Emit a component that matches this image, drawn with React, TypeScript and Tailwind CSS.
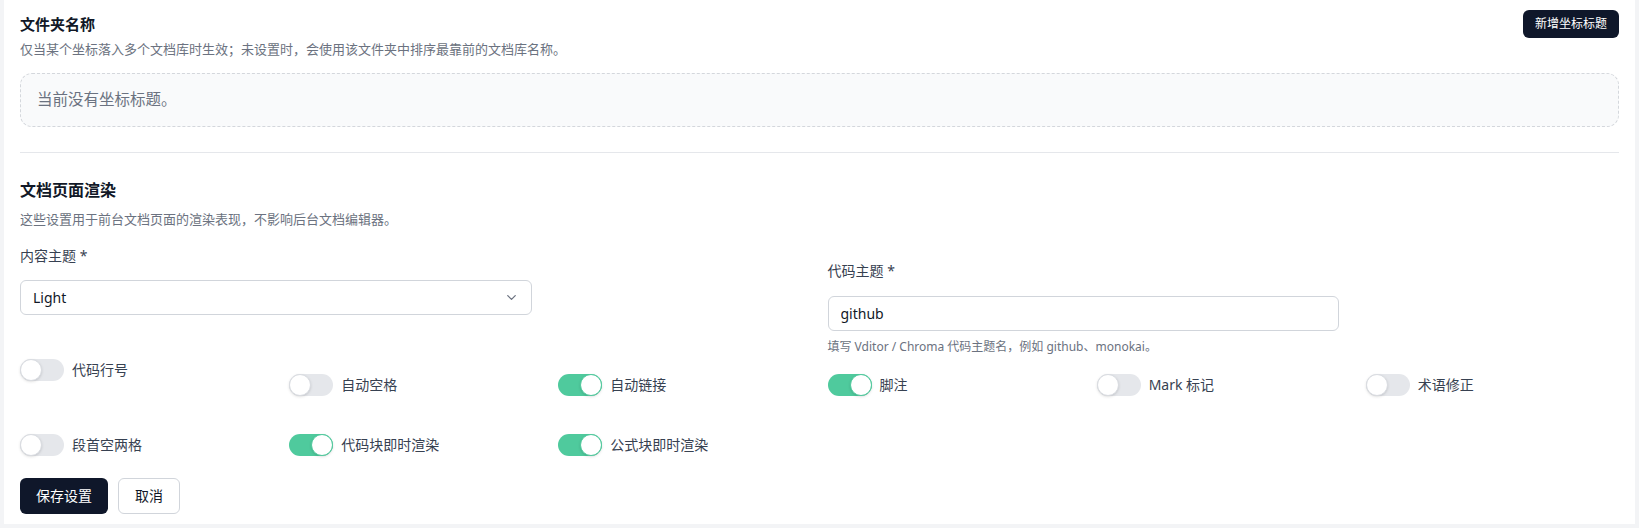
import { useState } from "react";
import { ChevronDown } from "lucide-react";

const FONT = { fontFamily: '"Noto Sans", "Noto Sans CJK SC", sans-serif' };

type Item = { key: string; label: string; on: boolean };

const ROW1: Item[] = [
  { key: "lineNumber", label: "代码行号", on: false },
  { key: "autoSpace", label: "自动空格", on: false },
  { key: "autoLink", label: "自动链接", on: true },
  { key: "footnotes", label: "脚注", on: true },
  { key: "mark", label: "Mark 标记", on: false },
  { key: "fixTerm", label: "术语修正", on: false },
];

const ROW2: Item[] = [
  { key: "paragraphIndent", label: "段首空两格", on: false },
  { key: "codeRender", label: "代码块即时渲染", on: true },
  { key: "mathRender", label: "公式块即时渲染", on: true },
];

function Toggle({ on, onClick }: { on: boolean; onClick: () => void }) {
  return (
    <button
      onClick={onClick}
      className={`relative h-[22px] w-[44px] shrink-0 rounded-full transition ${
        on ? "bg-[#4fca9d]" : "bg-[#e5e7eb]"
      }`}
    >
      <span
        className={`absolute top-0 h-[22px] w-[22px] rounded-full bg-white border shadow-sm transition ${
          on ? "left-[22px] border-[#4fca9d]" : "left-0 border-[#d9dce1]"
        }`}
      />
    </button>
  );
}

export default function App() {
  const [flags, setFlags] = useState<Record<string, boolean>>(() => {
    const init: Record<string, boolean> = {};
    [...ROW1, ...ROW2].forEach((i) => (init[i.key] = i.on));
    return init;
  });
  const flip = (k: string) => setFlags((p) => ({ ...p, [k]: !p[k] }));

  const cell = (item: Item, extra = "") => (
    <div key={item.key} className={`flex items-center gap-2 ${extra}`}>
      <Toggle on={flags[item.key]} onClick={() => flip(item.key)} />
      <span className="text-sm leading-5 text-[#374151]">{item.label}</span>
    </div>
  );

  return (
    <div className="min-h-[528px] bg-[#f3f4f6] pl-[4px] pr-[4px] pb-[5px]" style={FONT}>
      <div className="bg-white px-4 pt-[10px] pb-[10px]">
        {/* 文件夹名称 */}
        <div className="border-b border-[#e5e7eb] pb-[25px]">
          <div className="flex items-start justify-between">
            <div className="pt-[4px]">
              <h3 className="text-[15px] leading-5 font-bold text-[#111827]">文件夹名称</h3>
              <p className="mt-[6px] text-[13px] leading-[18px] text-[#6b7280]">
                仅当某个坐标落入多个文档库时生效；未设置时，会使用该文件夹中排序最靠前的文档库名称。
              </p>
            </div>
            <button className="h-7 rounded-md bg-[#0f172a] px-3 text-xs text-white">新增坐标标题</button>
          </div>
          <div className="mt-[15px] flex h-[54px] items-center rounded-xl border border-dashed border-[#d4d7dc] bg-[#f9fafb] px-4 text-[15.5px] text-[#6b7280]">
            当前没有坐标标题。
          </div>
        </div>

        {/* 文档页面渲染 */}
        <div className="pt-[25px]">
          <h3 className="text-base leading-6 font-bold text-[#111827]">文档页面渲染</h3>
          <p className="mt-2 text-[13px] leading-[18px] text-[#6b7280]">
            这些设置用于前台文档页面的渲染表现，不影响后台文档编辑器。
          </p>

          <div className="mt-[18px] grid grid-cols-2 gap-x-4">
            <div>
              <label className="block text-sm leading-5 text-[#374151]">内容主题 *</label>
              <div className="mt-[14px] flex h-[35px] w-[512px] items-center justify-between rounded-md border border-[#d1d5db] bg-white px-3 text-sm text-[#111827]">
                <span>Light</span>
                <ChevronDown size={15} className="text-[#6b7280]" />
              </div>
            </div>
            <div className="pt-[15px]">
              <label className="block text-sm leading-5 text-[#374151]">代码主题 *</label>
              <input
                defaultValue="github"
                className="mt-[15px] block h-[35px] w-[511px] rounded-md border border-[#d1d5db] bg-white px-3 text-sm text-[#111827] outline-none"
              />
              <p className="mt-[8px] text-xs leading-4 text-[#6b7280]">
                填写 Vditor / Chroma 代码主题名，例如 github、monokai。
              </p>
            </div>
          </div>

          <div className="mt-[4px] grid grid-cols-6 items-start gap-x-4">
            {ROW1.map((item, i) => cell(item, i === 0 ? "" : "mt-[15px]"))}
          </div>
          <div className="mt-[38px] grid grid-cols-6 items-start gap-x-4">
            {ROW2.map((item) => cell(item))}
          </div>

          <div className="mt-[22px] flex gap-[10px]">
            <button className="h-9 rounded-md bg-[#0f172a] px-4 text-sm text-white">保存设置</button>
            <button className="h-9 rounded-md border border-[#d1d5db] bg-white px-4 text-sm text-[#111827]">取消</button>
          </div>
        </div>
      </div>
    </div>
  );
}
